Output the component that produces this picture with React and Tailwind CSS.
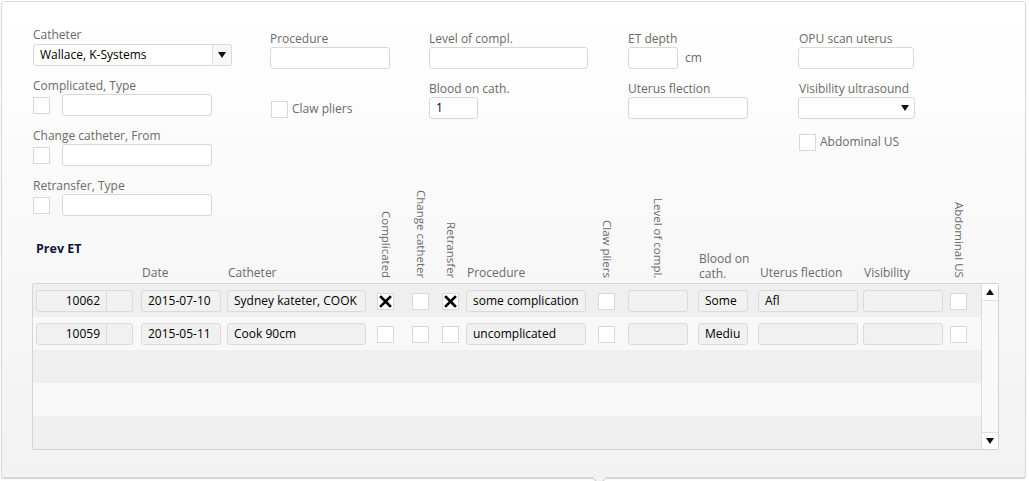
import React from "react";

const lbl = "h-4 leading-4 text-[#6a6a6a] whitespace-nowrap";
const inp = "h-[22px] border border-[#d8d8d8] rounded-[3px] bg-white flex items-center px-[6px] text-black";
const box = "w-[17px] h-[17px] border border-[#d8d8d8] bg-white shrink-0";
const cell = "h-[22px] border border-[#dadada] rounded-[3px] bg-[#f1f1f1] flex items-center text-black whitespace-nowrap overflow-hidden";

function Arrow({ up }) {
  return (
    <svg width="8" height="6" viewBox="0 0 8 6">
      {up ? <path d="M0 6 L4 0 L8 6 Z" fill="#111" /> : <path d="M0 0 L8 0 L4 6 Z" fill="#111" />}
    </svg>
  );
}

function Cross() {
  return (
    <svg width="13" height="13" viewBox="0 0 13 13">
      <path d="M2 2 L11 11 M11 2 L2 11" stroke="#000" strokeWidth="2.6" strokeLinecap="square" />
    </svg>
  );
}

const rows = [
  { id: "10062", date: "2015-07-10", cath: "Sydney kateter, COOK", comp: true, chg: false, retr: true, proc: "some complication", blood: "Some", ut: "Afl" },
  { id: "10059", date: "2015-05-11", cath: "Cook 90cm", comp: false, chg: false, retr: false, proc: "uncomplicated", blood: "Mediu", ut: "" },
];

function Rot({ children, cls }) {
  return (
    <div className={`${cls} flex justify-center mb-[5px]`}>
      <span className="[writing-mode:vertical-rl] leading-4 text-[11.5px] text-[#6a6a6a] whitespace-nowrap">{children}</span>
    </div>
  );
}

export default function App() {
  return (
    <div className="w-[1029px] h-[481px] bg-white relative font-['Open_Sans',sans-serif] text-[12px] pt-[1px] pl-[1px]">
      <div className="relative w-[1025px] h-[477px] border border-[#d9d9d9] rounded-[3px] bg-gradient-to-b from-white to-[#f2f2f2] shadow-[0_1px_1px_rgba(0,0,0,0.2)] pl-[30px] pt-[25px]">
        {/* FORM */}
        <div className="flex pl-[1px]">
          <div className="w-[237px] flex flex-col">
            <div className={lbl}>Catheter</div>
            <div className="mt-[1px] w-[199px] h-[22px] border border-[#d8d8d8] rounded-[3px] bg-white flex">
              <div className="flex-1 flex items-center pl-[6px] text-black">Wallace, K-Systems</div>
              <div className="w-[19px] border-l border-[#e2e2e2] bg-[#f7f7f7] flex items-center justify-center rounded-r-[3px]">
                <Arrow />
              </div>
            </div>
            {["Complicated, Type", "Change catheter, From", "Retransfer, Type"].map((t) => (
              <div key={t} className="mt-[12px]">
                <div className={lbl}>{t}</div>
                <div className="flex items-center">
                  <div className={box} />
                  <div className={`${inp} ml-[12px] w-[150px]`} />
                </div>
              </div>
            ))}
          </div>

          <div className="w-[159px] pt-[4px] flex flex-col">
            <div className={lbl}>Procedure</div>
            <div className={`${inp} w-[120px]`} />
            <div className="mt-[31px] flex items-center ml-[1px]">
              <div className={box} />
              <span className="ml-[4px] text-[#6a6a6a]">Claw pliers</span>
            </div>
          </div>

          <div className="w-[199px] pt-[4px] flex flex-col">
            <div className={lbl}>Level of compl.</div>
            <div className={`${inp} w-[159px]`} />
            <div className={`${lbl} mt-[12px]`}>Blood on cath.</div>
            <div className={`${inp} w-[49px]`}>1</div>
          </div>

          <div className="w-[170px] pt-[4px] flex flex-col">
            <div className={lbl}>ET depth</div>
            <div className="flex items-center">
              <div className={`${inp} w-[50px]`} />
              <span className="ml-[7px] text-[#6a6a6a]">cm</span>
            </div>
            <div className={`${lbl} mt-[12px]`}>Uterus flection</div>
            <div className={`${inp} w-[120px]`} />
          </div>

          <div className="w-[140px] pt-[4px] flex flex-col">
            <div className={`${lbl} pl-[1px]`}>OPU scan uterus</div>
            <div className={`${inp} w-[116px]`} />
            <div className={`${lbl} mt-[12px] pl-[1px]`}>Visibility ultrasound</div>
            <div className={`${inp} w-[117px] justify-end pr-[5px]`}>
              <Arrow />
            </div>
            <div className="mt-[14px] flex items-center ml-[1px]">
              <div className={box} />
              <span className="ml-[4px] text-[#6a6a6a]">Abdominal US</span>
            </div>
          </div>
        </div>

        {/* TABLE HEADER */}
        <div className="flex items-end h-[67px]">
          <div className="ml-[4px] w-[97px] self-start mt-[25px] h-4 leading-4 font-bold text-[12.5px] text-[#10143a]">Prev ET</div>
          <div className={`ml-[8px] w-[80px] ${lbl} mb-[2px] pl-[1px]`}>Date</div>
          <div className={`ml-[6px] w-[139px] ${lbl} mb-[2px] pl-[1px]`}>Catheter</div>
          <Rot cls="ml-[11px] w-[17px]">Complicated</Rot>
          <Rot cls="ml-[18px] w-[17px]">Change catheter</Rot>
          <Rot cls="ml-[13px] w-[17px]">Retransfer</Rot>
          <div className={`ml-[7px] w-[120px] ${lbl} mb-[2px] pl-[1px]`}>Procedure</div>
          <Rot cls="ml-[12px] w-[17px]">Claw pliers</Rot>
          <Rot cls="ml-[13px] w-[60px]">Level of compl.</Rot>
          <div className="ml-[10px] w-[50px] leading-[15px] text-[#6a6a6a] whitespace-nowrap mb-[2px] pl-[1px]">
            Blood on
            <br />
            cath.
          </div>
          <div className={`ml-[10px] w-[100px] ${lbl} mb-[2px] pl-[2px]`}>Uterus flection</div>
          <div className={`ml-[5px] w-[80px] ${lbl} mb-[2px] pl-[1px]`}>Visibility</div>
          <Rot cls="ml-[7px] w-[17px]">Abdominal US</Rot>
        </div>

        {/* GRID */}
        <div className="w-[967px] h-[167px] border border-[#d4d4d4] rounded-[2px] flex">
          <div className="flex-1 flex flex-col">
            {[0, 1, 2, 3, 4].map((i) => {
              const r = rows[i];
              return (
                <div key={i} className={`h-[33px] flex items-center pt-[1px] ${i % 2 === 0 ? "bg-[#efefef]" : "bg-[#f8f8f8]"}`}>
                  {r && (
                    <>
                      <div className={`${cell} ml-[3px] w-[97px]`}>
                        <div className="w-[70px] h-full flex items-center justify-end pr-[6px] border-r border-[#dadada]">{r.id}</div>
                      </div>
                      <div className={`${cell} ml-[8px] w-[80px] pl-[6px]`}>{r.date}</div>
                      <div className={`${cell} ml-[6px] w-[139px] pl-[6px]`}>{r.cath}</div>
                      <div className={`${box} ml-[11px] flex items-center justify-center`}>{r.comp && <Cross />}</div>
                      <div className={`${box} ml-[18px] flex items-center justify-center`}>{r.chg && <Cross />}</div>
                      <div className={`${box} ml-[13px] flex items-center justify-center`}>{r.retr && <Cross />}</div>
                      <div className={`${cell} ml-[7px] w-[120px] pl-[6px]`}>{r.proc}</div>
                      <div className={`${box} ml-[12px]`} />
                      <div className={`${cell} ml-[13px] w-[60px]`} />
                      <div className={`${cell} ml-[10px] w-[50px] pl-[6px]`}>{r.blood}</div>
                      <div className={`${cell} ml-[10px] w-[100px] pl-[6px]`}>{r.ut}</div>
                      <div className={`${cell} ml-[5px] w-[80px]`} />
                      <div className={`${box} ml-[7px]`} />
                    </>
                  )}
                </div>
              );
            })}
          </div>
          <div className="w-[17px] border-l border-[#dcdcdc] bg-[#f9f9f9] flex flex-col justify-between">
            <div className="h-[17px] border-b border-[#e0e0e0] bg-white flex items-center justify-center">
              <Arrow up />
            </div>
            <div className="h-[17px] border-t border-[#e0e0e0] bg-white flex items-center justify-center">
              <Arrow />
            </div>
          </div>
        </div>

        {/* pointer */}
        <div className="absolute left-[592px] bottom-[-6px] w-[11px] h-[11px] rotate-45 bg-[#f2f2f2] border-r border-b border-[#d0d0d0]" />
      </div>
    </div>
  );
}
